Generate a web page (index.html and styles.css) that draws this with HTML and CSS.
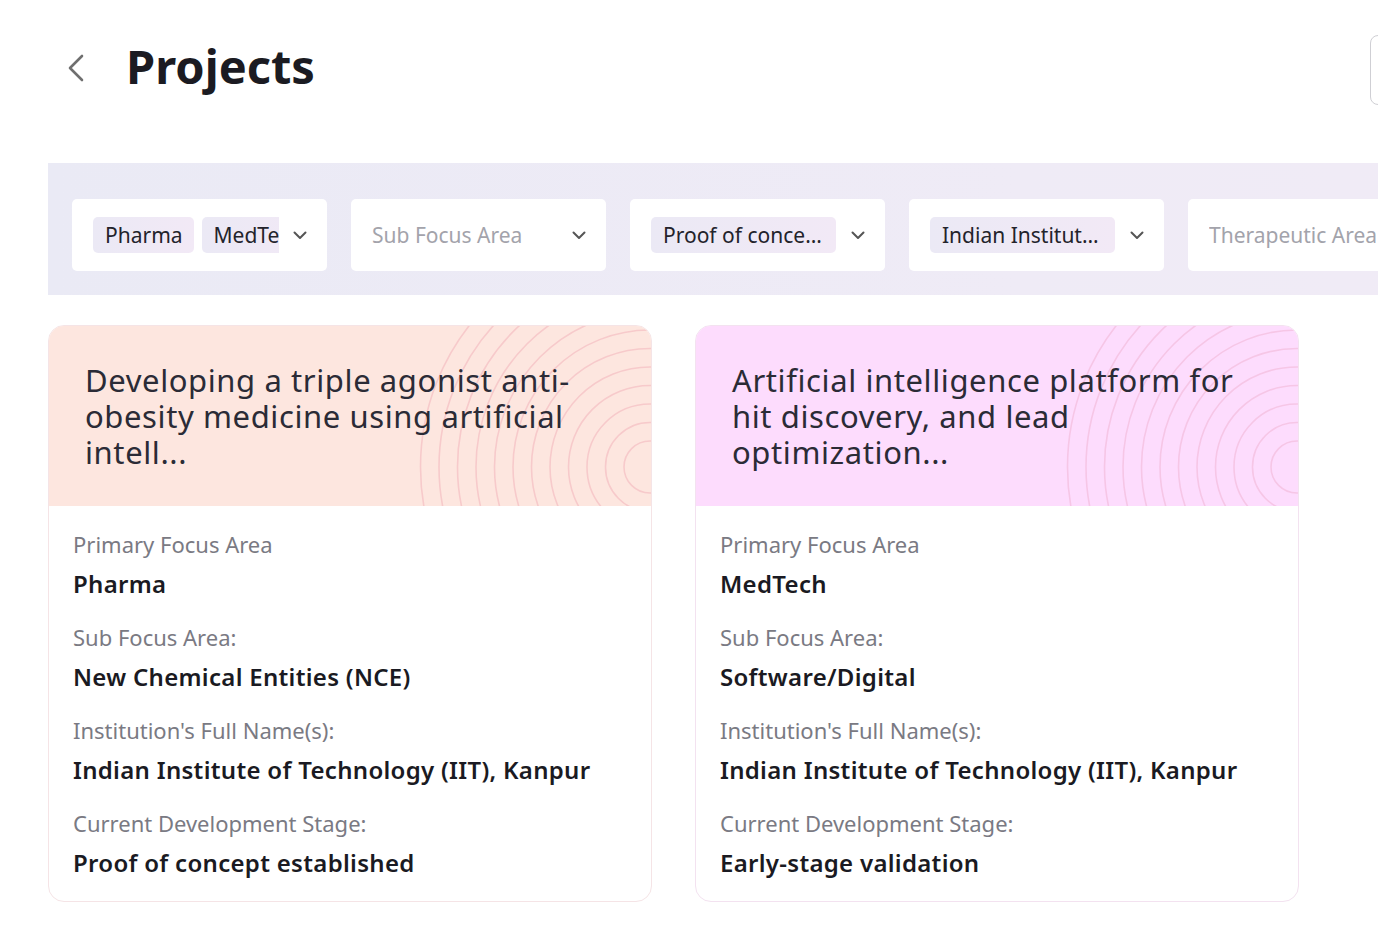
FILE: index.html
```html
<!DOCTYPE html>
<html lang="en">
<head>
<meta charset="utf-8">
<title>Projects</title>
<link rel="stylesheet" href="styles.css">
</head>
<body>
<div class="page">
  <header class="header">
    <button class="back" aria-label="Back">
      <svg width="20" height="30" viewBox="0 0 20 30"><polyline points="16 3 4 15 16 27" fill="none" stroke="#6f6f6f" stroke-width="2.6" stroke-linecap="round" stroke-linejoin="round"/></svg>
    </button>
    <h1 class="title">Projects</h1>
    <div class="search-box"></div>
  </header>

  <section class="filters">
    <div class="filter">
      <div class="values">
        <span class="chip">Pharma</span><span class="chip">MedTech</span>
      </div>
      <svg class="chev" width="24" height="24" viewBox="0 0 24 24"><polyline points="6.5 9.5 12 15 17.5 9.5" fill="none" stroke="#555" stroke-width="2" stroke-linecap="round" stroke-linejoin="round"/></svg>
    </div>
    <div class="filter">
      <div class="values"><span class="placeholder">Sub Focus Area</span></div>
      <svg class="chev" width="24" height="24" viewBox="0 0 24 24"><polyline points="6.5 9.5 12 15 17.5 9.5" fill="none" stroke="#555" stroke-width="2" stroke-linecap="round" stroke-linejoin="round"/></svg>
    </div>
    <div class="filter">
      <div class="values"><span class="chip chip-ellipsis">Proof of concept established</span></div>
      <svg class="chev" width="24" height="24" viewBox="0 0 24 24"><polyline points="6.5 9.5 12 15 17.5 9.5" fill="none" stroke="#555" stroke-width="2" stroke-linecap="round" stroke-linejoin="round"/></svg>
    </div>
    <div class="filter">
      <div class="values"><span class="chip chip-ellipsis">Indian Institute of Technology (IIT), Kanpur</span></div>
      <svg class="chev" width="24" height="24" viewBox="0 0 24 24"><polyline points="6.5 9.5 12 15 17.5 9.5" fill="none" stroke="#555" stroke-width="2" stroke-linecap="round" stroke-linejoin="round"/></svg>
    </div>
    <div class="filter">
      <div class="values"><span class="placeholder">Therapeutic Area</span></div>
      <svg class="chev" width="24" height="24" viewBox="0 0 24 24"><polyline points="6.5 9.5 12 15 17.5 9.5" fill="none" stroke="#555" stroke-width="2" stroke-linecap="round" stroke-linejoin="round"/></svg>
    </div>
  </section>

  <section class="cards">
    <article class="card card-peach">
      <div class="card-head">
        <svg class="rings" width="260" height="180" viewBox="0 0 260 180">
          <g fill="none" stroke-width="1.6">
            <circle cx="259" cy="141" r="26"/><circle cx="259" cy="141" r="44.5"/><circle cx="259" cy="141" r="63"/><circle cx="259" cy="141" r="81.5"/><circle cx="259" cy="141" r="100"/><circle cx="259" cy="141" r="118.5"/><circle cx="259" cy="141" r="137"/><circle cx="259" cy="141" r="155.5"/><circle cx="259" cy="141" r="174"/><circle cx="259" cy="141" r="192.5"/><circle cx="259" cy="141" r="211"/><circle cx="259" cy="141" r="229.5"/>
          </g>
        </svg>
        <h2 class="card-title">Developing a triple agonist anti-obesity medicine using artificial intell...</h2>
      </div>
      <div class="card-body">
        <div class="field"><div class="label">Primary Focus Area</div><div class="value">Pharma</div></div>
        <div class="field"><div class="label">Sub Focus Area:</div><div class="value">New Chemical Entities (NCE)</div></div>
        <div class="field"><div class="label">Institution's Full Name(s):</div><div class="value">Indian Institute of Technology (IIT), Kanpur</div></div>
        <div class="field"><div class="label">Current Development Stage:</div><div class="value">Proof of concept established</div></div>
      </div>
    </article>

    <article class="card card-pink">
      <div class="card-head">
        <svg class="rings" width="260" height="180" viewBox="0 0 260 180">
          <g fill="none" stroke-width="1.6">
            <circle cx="259" cy="141" r="26"/><circle cx="259" cy="141" r="44.5"/><circle cx="259" cy="141" r="63"/><circle cx="259" cy="141" r="81.5"/><circle cx="259" cy="141" r="100"/><circle cx="259" cy="141" r="118.5"/><circle cx="259" cy="141" r="137"/><circle cx="259" cy="141" r="155.5"/><circle cx="259" cy="141" r="174"/><circle cx="259" cy="141" r="192.5"/><circle cx="259" cy="141" r="211"/><circle cx="259" cy="141" r="229.5"/>
          </g>
        </svg>
        <h2 class="card-title">Artificial intelligence platform for hit discovery, and lead optimization...</h2>
      </div>
      <div class="card-body">
        <div class="field"><div class="label">Primary Focus Area</div><div class="value">MedTech</div></div>
        <div class="field"><div class="label">Sub Focus Area:</div><div class="value">Software/Digital</div></div>
        <div class="field"><div class="label">Institution's Full Name(s):</div><div class="value">Indian Institute of Technology (IIT), Kanpur</div></div>
        <div class="field"><div class="label">Current Development Stage:</div><div class="value">Early-stage validation</div></div>
      </div>
    </article>
  </section>
</div>
</body>
</html>
```

FILE: styles.css
```css
* { box-sizing: border-box; }

html, body {
  margin: 0;
  padding: 0;
  background: #ffffff;
  overflow: hidden;
}

body {
  font-family: "Noto Sans", "Open Sans", sans-serif;
  color: #1d1d25;
  width: 1378px;
  height: 945px;
}

.page {
  width: 1670px;
  padding-left: 48px;
}

/* Header */
.header {
  display: flex;
  align-items: flex-start;
  padding-top: 35px;
  height: 163px;
}

.back {
  width: 78px;
  height: 66px;
  border: 0;
  background: none;
  padding: 0 0 0 18px;
  display: flex;
  align-items: center;
  cursor: pointer;
}

.title {
  margin: -4px 0 0 0;
  font-size: 47px;
  line-height: 70px;
  font-weight: 700;
  color: #1b1b22;
  letter-spacing: 0;
}

.search-box {
  margin-left: auto;
  width: 300px;
  height: 70px;
  border: 1px solid #cfcfd4;
  border-radius: 8px;
}

/* Filters */
.filters {
  display: flex;
  gap: 24px;
  padding: 36px 24px 24px 24px;
  width: 1622px;
  background: linear-gradient(90deg, #eaeaf5 0%, #efebf6 60%, #f1ebf6 100%);
}

.filter {
  flex: 0 0 255px;
  min-width: 0;
  height: 72px;
  background: #ffffff;
  border-radius: 5px;
  display: flex;
  align-items: center;
  padding: 0 15px 0 21px;
}

.values {
  flex: 1;
  min-width: 0;
  display: flex;
  gap: 8px;
  overflow: hidden;
  margin-right: 9px;
}

.chip {
  flex: 0 0 auto;
  height: 36px;
  line-height: 36px;
  padding: 0 11px 0 12px;
  border-radius: 5px;
  font-size: 21px;
  color: #23232b;
  background: linear-gradient(90deg, #ebe9f5, #f2e9f6);
  white-space: nowrap;
}

.chip-ellipsis {
  flex: 0 1 auto;
  min-width: 0;
  max-width: 185px;
  overflow: hidden;
  text-overflow: ellipsis;
}

.placeholder {
  font-size: 21px;
  line-height: 36px;
  color: #a3a3ab;
  white-space: nowrap;
}

.chev { flex: 0 0 24px; }

/* Cards */
.cards {
  display: grid;
  grid-template-columns: 604px 604px;
  column-gap: 43px;
  margin-top: 30px;
}

.card {
  border: 1px solid #f5e4e6;
  border-radius: 16px;
  overflow: hidden;
  background: #ffffff;
}

.card-head {
  position: relative;
  height: 180px;
  padding: 36px 36px 0 36px;
  overflow: hidden;
}

.card-peach .card-head { background: #fde6df; }
.card-peach .rings { stroke: #f7cacb; }
.card-pink .card-head { background: #fddcfd; }
.card-pink .rings { stroke: #f6c6e6; }
.card-pink { border-color: #f3e2f0; }

.rings {
  position: absolute;
  right: 0;
  top: 0;
}

.card-title {
  position: relative;
  margin: 0;
  font-size: 31px;
  line-height: 36px;
  font-weight: 400;
  color: #2b2b36;
  letter-spacing: 0.6px;
}

.card-body {
  padding: 24px 24px 23px 24px;
  display: flex;
  flex-direction: column;
  gap: 24px;
}

.label {
  font-size: 22px;
  line-height: 28px;
  color: #7a7a83;
  margin-bottom: 11px;
}

.value {
  font-size: 24px;
  line-height: 30px;
  font-weight: 600;
  color: #1a1a22;
  letter-spacing: 0.3px;
}
```
